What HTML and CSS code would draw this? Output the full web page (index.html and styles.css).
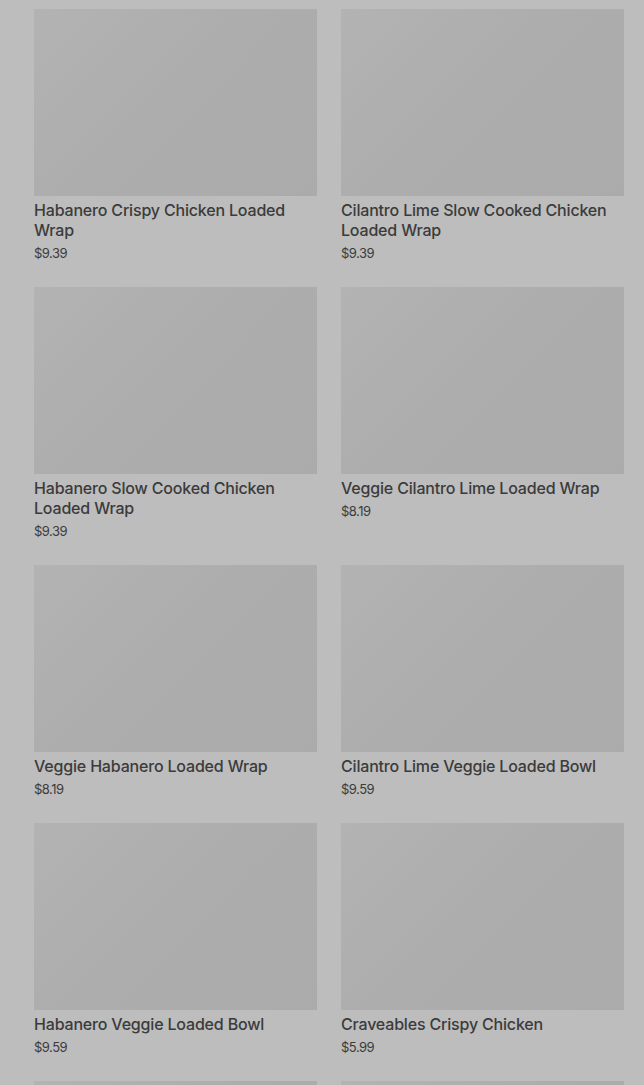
FILE: index.html
```html
<!DOCTYPE html>
<html lang="en">
<head>
    <meta charset="UTF-8">
    <meta name="viewport" content="width=device-width, initial-scale=1.0">
    <title>Menu</title>
    <link rel="stylesheet" href="styles.css">
</head>
<body>
    <div class="grid">
        <div class="card">
            <div class="thumb"></div>
            <div class="name">Habanero Crispy Chicken Loaded Wrap</div>
            <div class="price">$9.39</div>
        </div>
        <div class="card">
            <div class="thumb"></div>
            <div class="name">Cilantro Lime Slow Cooked Chicken Loaded Wrap</div>
            <div class="price">$9.39</div>
        </div>
        <div class="card">
            <div class="thumb"></div>
            <div class="name">Habanero Slow Cooked Chicken Loaded Wrap</div>
            <div class="price">$9.39</div>
        </div>
        <div class="card">
            <div class="thumb"></div>
            <div class="name">Veggie Cilantro Lime Loaded Wrap</div>
            <div class="price">$8.19</div>
        </div>
        <div class="card">
            <div class="thumb"></div>
            <div class="name">Veggie Habanero Loaded Wrap</div>
            <div class="price">$8.19</div>
        </div>
        <div class="card">
            <div class="thumb"></div>
            <div class="name">Cilantro Lime Veggie Loaded Bowl</div>
            <div class="price">$9.59</div>
        </div>
        <div class="card">
            <div class="thumb"></div>
            <div class="name">Habanero Veggie Loaded Bowl</div>
            <div class="price">$9.59</div>
        </div>
        <div class="card">
            <div class="thumb"></div>
            <div class="name">Craveables Crispy Chicken</div>
            <div class="price">$5.99</div>
        </div>
        <div class="card">
            <div class="thumb"></div>
        </div>
        <div class="card">
            <div class="thumb"></div>
        </div>
    </div>
</body>
</html>
```

FILE: styles.css
```css
body {
    margin: 0;
    background-color: #bdbdbd;
    font-family: Inter, Roboto, sans-serif;
    color: #3b3b3b;
    overflow: hidden;
}
.grid {
    display: grid;
    grid-template-columns: 283px 283px;
    column-gap: 24px;
    padding: 9px 20px 0 34px;
}
.card {
    margin-bottom: 24px;
}
.thumb {
    height: 187px;
    background: linear-gradient(135deg, #b3b3b3 0%, #adadad 45%, #ababab 100%);
}
.name {
    margin-top: 4px;
    font-size: 16px;
    font-weight: 500;
    line-height: 20px;
    letter-spacing: -0.18px;
}
.price {
    margin-top: 3px;
    font-size: 13px;
    line-height: 20px;
    letter-spacing: -0.5px;
}
```
